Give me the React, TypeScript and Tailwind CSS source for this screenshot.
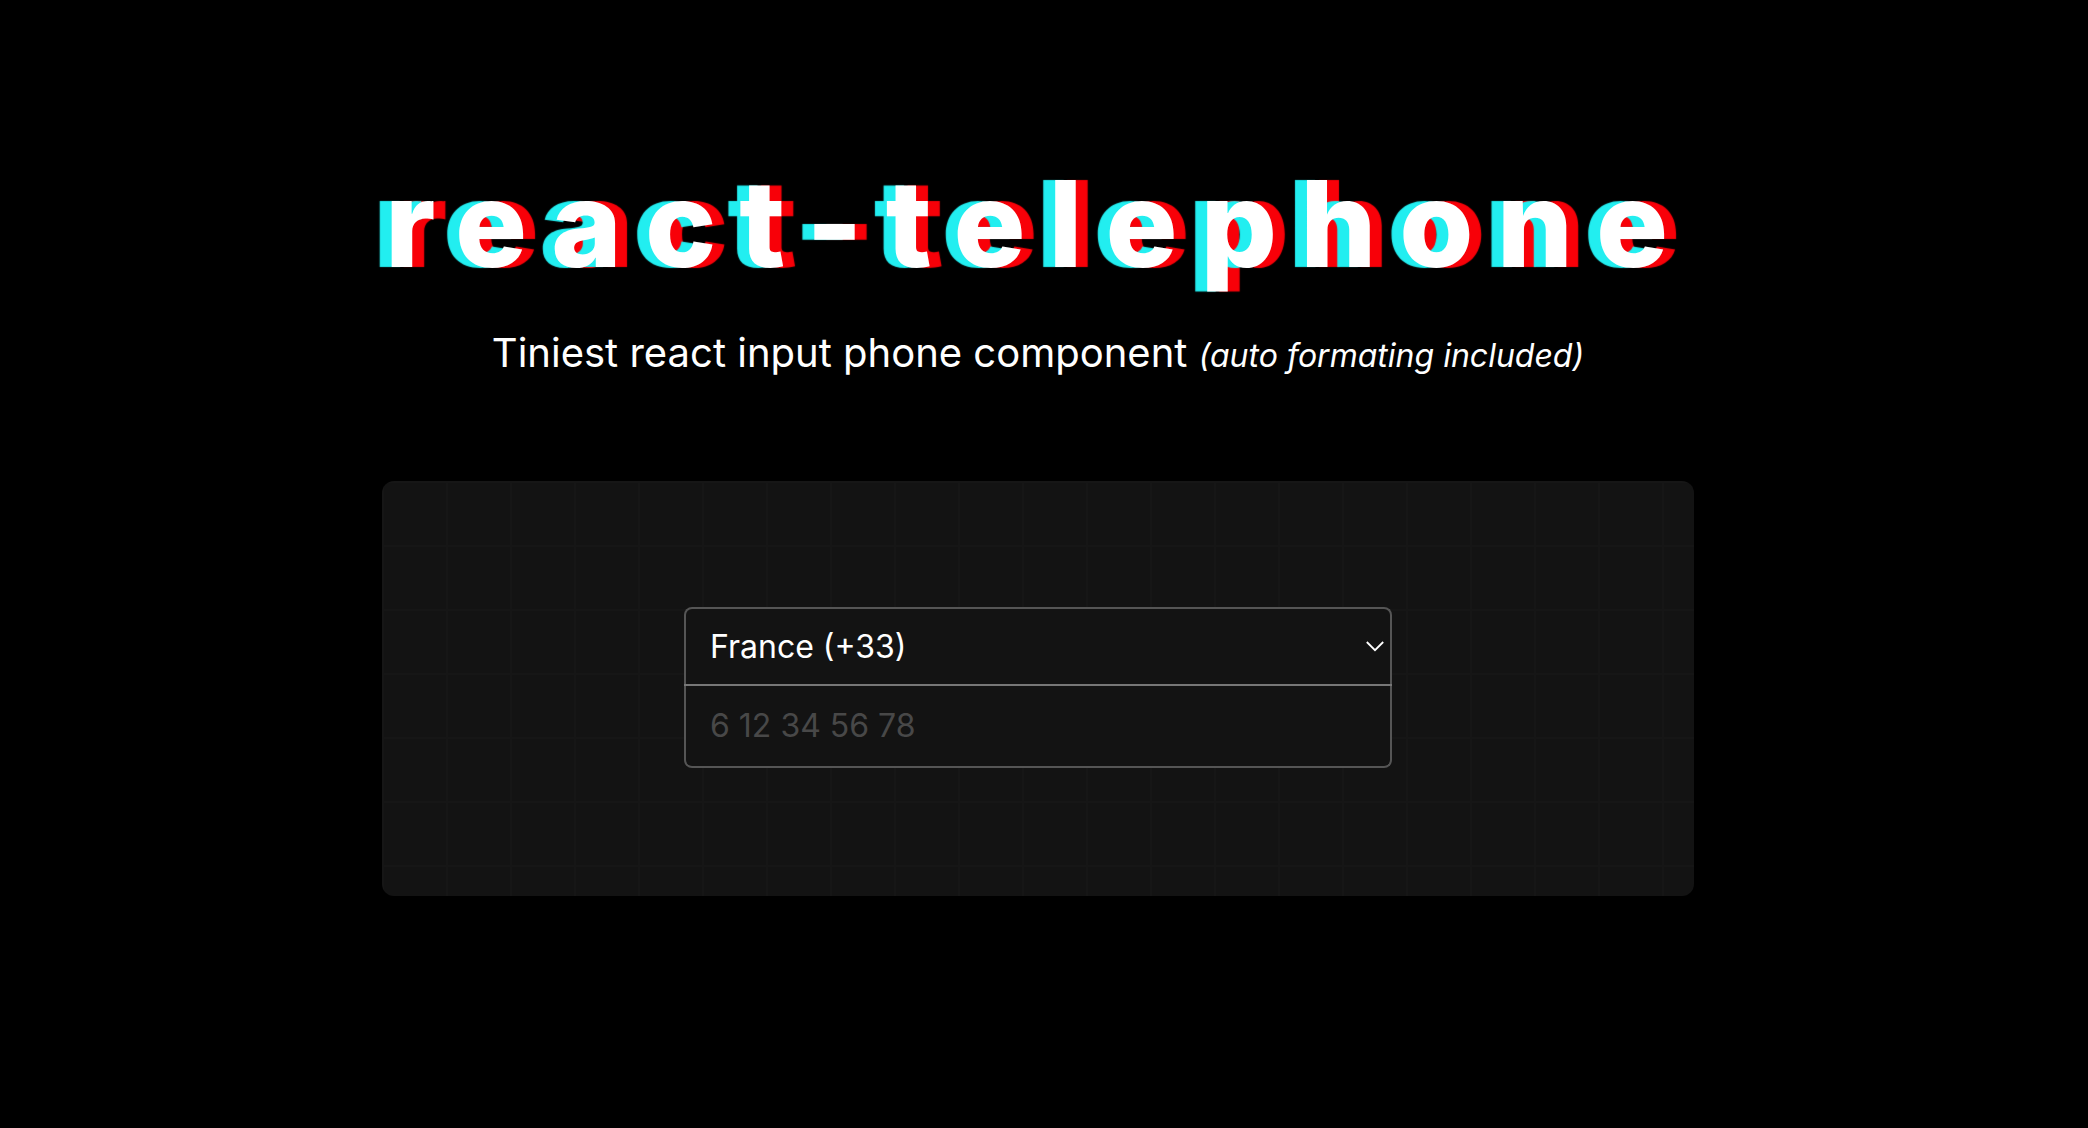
import React from "react";

function Title() {
  return (
    <h1 className="text-[120px] leading-[144px] font-extrabold tracking-[23px] whitespace-nowrap text-white [text-shadow:-12px_0_1px_#22eef0,12px_0_1px_#f80008]">
      react-telephone
    </h1>
  );
}

function PhoneInput() {
  return (
    <div className="w-full max-w-[708px] text-[32px]">
      <div className="relative">
        <select
          aria-label="Country"
          className="block h-[77px] w-full appearance-none rounded-t-lg border-2 border-b-0 border-[#555] bg-[#131313] px-6 text-white"
        >
          <option>France (+33)</option>
        </select>
        <svg
          className="pointer-events-none absolute top-1/2 right-2 h-3 w-[18px] -translate-y-1/2"
          viewBox="0 0 18 12"
          fill="none"
          stroke="white"
          strokeWidth="1.8"
        >
          <path d="M0.8 2l8.2 8.2L17.2 2" />
        </svg>
      </div>
      <hr className="h-0.5 border-0 bg-[#777]" />
      <input
        type="tel"
        aria-label="Phone number"
        placeholder="6 12 34 56 78"
        className="block h-[82px] w-full rounded-b-lg border-2 border-t-0 border-[#555] bg-[#131313] px-6 pb-0.5 placeholder:text-[#484848]"
      />
    </div>
  );
}

export default function App() {
  return (
    <main className="min-h-screen bg-black pt-[152px] pr-11 pl-8 font-['Inter',sans-serif] text-white">
      <div className="mx-auto flex max-w-[1312px] flex-col items-center">
        <Title />
        <p className="mt-[27px] text-[40px] leading-[60px] whitespace-nowrap">
          Tiniest react input phone component <em className="text-[32px]">(auto formating included)</em>
        </p>
        <section className="mt-[95px] flex w-full justify-center rounded-xl bg-[#131313] bg-[linear-gradient(to_right,#161616_2px,transparent_2px),linear-gradient(to_bottom,#161616_2px,transparent_2px)] bg-size-[64px_64px] pt-[126px] pb-32">
          <PhoneInput />
        </section>
      </div>
    </main>
  );
}
